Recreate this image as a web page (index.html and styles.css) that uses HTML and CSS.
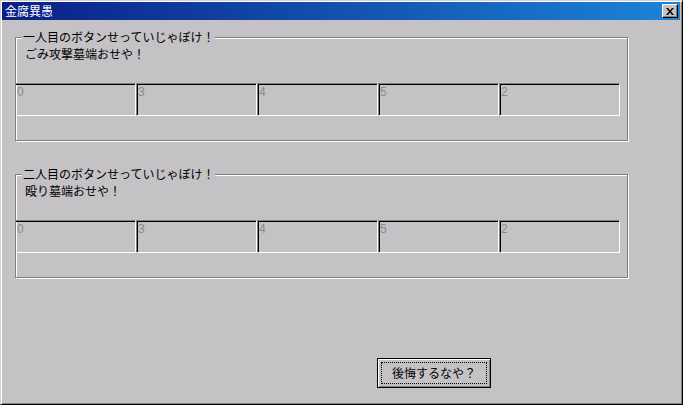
FILE: index.html
```html
<!DOCTYPE html>
<html lang="ja">
  <head>
    <meta charset="UTF-8" />
    <title>金腐異愚</title>
    <link rel="stylesheet" href="styles.css">
  </head>
  <body>
    <div class="window">
      <!-- タイトルバー -->
      <div class="titlebar">
        <span class="title">金腐異愚</span>
        <span class="close">
          <svg width="8" height="7" viewBox="0 0 8 7">
            <path d="M0 0h2l2 2.5L6 0h2L5 3.5 8 7H6L4 4.5 2 7H0l3-3.5z" fill="#000"/>
          </svg>
        </span>
      </div>

      <div class="client">
        <!-- 一人目 -->
        <fieldset class="group">
          <legend>一人目のボタンせっていじゃぼけ！</legend>
          <p class="label">ごみ攻撃墓端おせや！</p>
          <div class="edits">
            <div class="edit first">0</div>
            <div class="edit">3</div>
            <div class="edit">4</div>
            <div class="edit">5</div>
            <div class="edit">2</div>
          </div>
        </fieldset>

        <!-- 二人目 -->
        <fieldset class="group">
          <legend>二人目のボタンせっていじゃぼけ！</legend>
          <p class="label">殴り墓端おせや！</p>
          <div class="edits">
            <div class="edit first">0</div>
            <div class="edit">3</div>
            <div class="edit">4</div>
            <div class="edit">5</div>
            <div class="edit">2</div>
          </div>
        </fieldset>

        <div class="footer">
          <button class="btn"><span class="focus">後悔するなや？</span></button>
        </div>
      </div>
    </div>
  </body>
</html>
```
FILE: styles.css
```css
* {
  margin: 0;
  padding: 0;
  box-sizing: border-box;
}
body {
  background: #c5c2c6;
  font-family: "Noto Sans CJK JP", "Liberation Sans", sans-serif;
  font-size: 12px;
  color: #000;
}

.window {
  width: 683px;
  height: 405px;
  background: #c5c2c6;
  border: 1px solid;
  border-color: #d4d0d4 #000 #000 #d4d0d4;
  box-shadow: inset 1px 1px 0 #fff, inset -1px -1px 0 #808080;
  padding: 1px 2px 2px 1px;
  display: flex;
  flex-direction: column;
}

.titlebar {
  height: 18px;
  display: flex;
  align-items: center;
  justify-content: space-between;
  padding: 0 2px 0 3px;
  background: linear-gradient(to right, #0a1f86, #1c84d6);
  color: #fff;
}
.title {
  font-size: 12px;
  line-height: 14px;
}
.close {
  width: 16px;
  height: 14px;
  display: flex;
  align-items: center;
  justify-content: center;
  background: #c5c2c6;
  border: 1px solid;
  border-color: #fff #000 #000 #fff;
  box-shadow: inset -1px -1px 0 #808080;
}

.client {
  flex: 1;
  display: flex;
  flex-direction: column;
  padding: 10px 0 0 13px;
}

.group {
  width: 613px;
  height: 111px;
  border: 1px solid #808080;
  box-shadow: 1px 1px 0 #fff, inset 1px 1px 0 #fff;
  padding: 3px 0 0 0;
  margin-bottom: 26px;
}
.group legend {
  margin-left: 6px;
  padding: 0 1px;
  line-height: 14px;
  background: #c5c2c6;
}

.label {
  margin-left: 9px;
  line-height: 14px;
}

.edits {
  display: flex;
  margin-top: 22px;
}
.edit {
  width: 121px;
  height: 33px;
  border: 1px solid;
  border-color: #808080 #fff #fff #808080;
  box-shadow: inset 1px 1px 0 #000;
  font-family: "Liberation Sans", sans-serif;
  font-size: 12px;
  line-height: 14px;
  color: #8c8a8c;
  padding: 1px 0 0 1px;
}
.edit.first {
  width: 120px;
  border-left: none;
  box-shadow: inset 0 1px 0 #000;
}

.footer {
  display: flex;
  padding: 54px 0 0 362px;
}
.btn {
  width: 114px;
  height: 30px;
  border: 1px solid #000;
  background: #c5c2c6;
  box-shadow: inset 1px 1px 0 #fff, inset -1px -1px 0 #808080;
  padding: 3px;
  font-family: "Noto Sans CJK JP", sans-serif;
  font-size: 12px;
  display: flex;
}
.btn .focus {
  flex: 1;
  border: 1px dotted #000;
  display: flex;
  align-items: center;
  justify-content: center;
  line-height: 14px;
}
```
